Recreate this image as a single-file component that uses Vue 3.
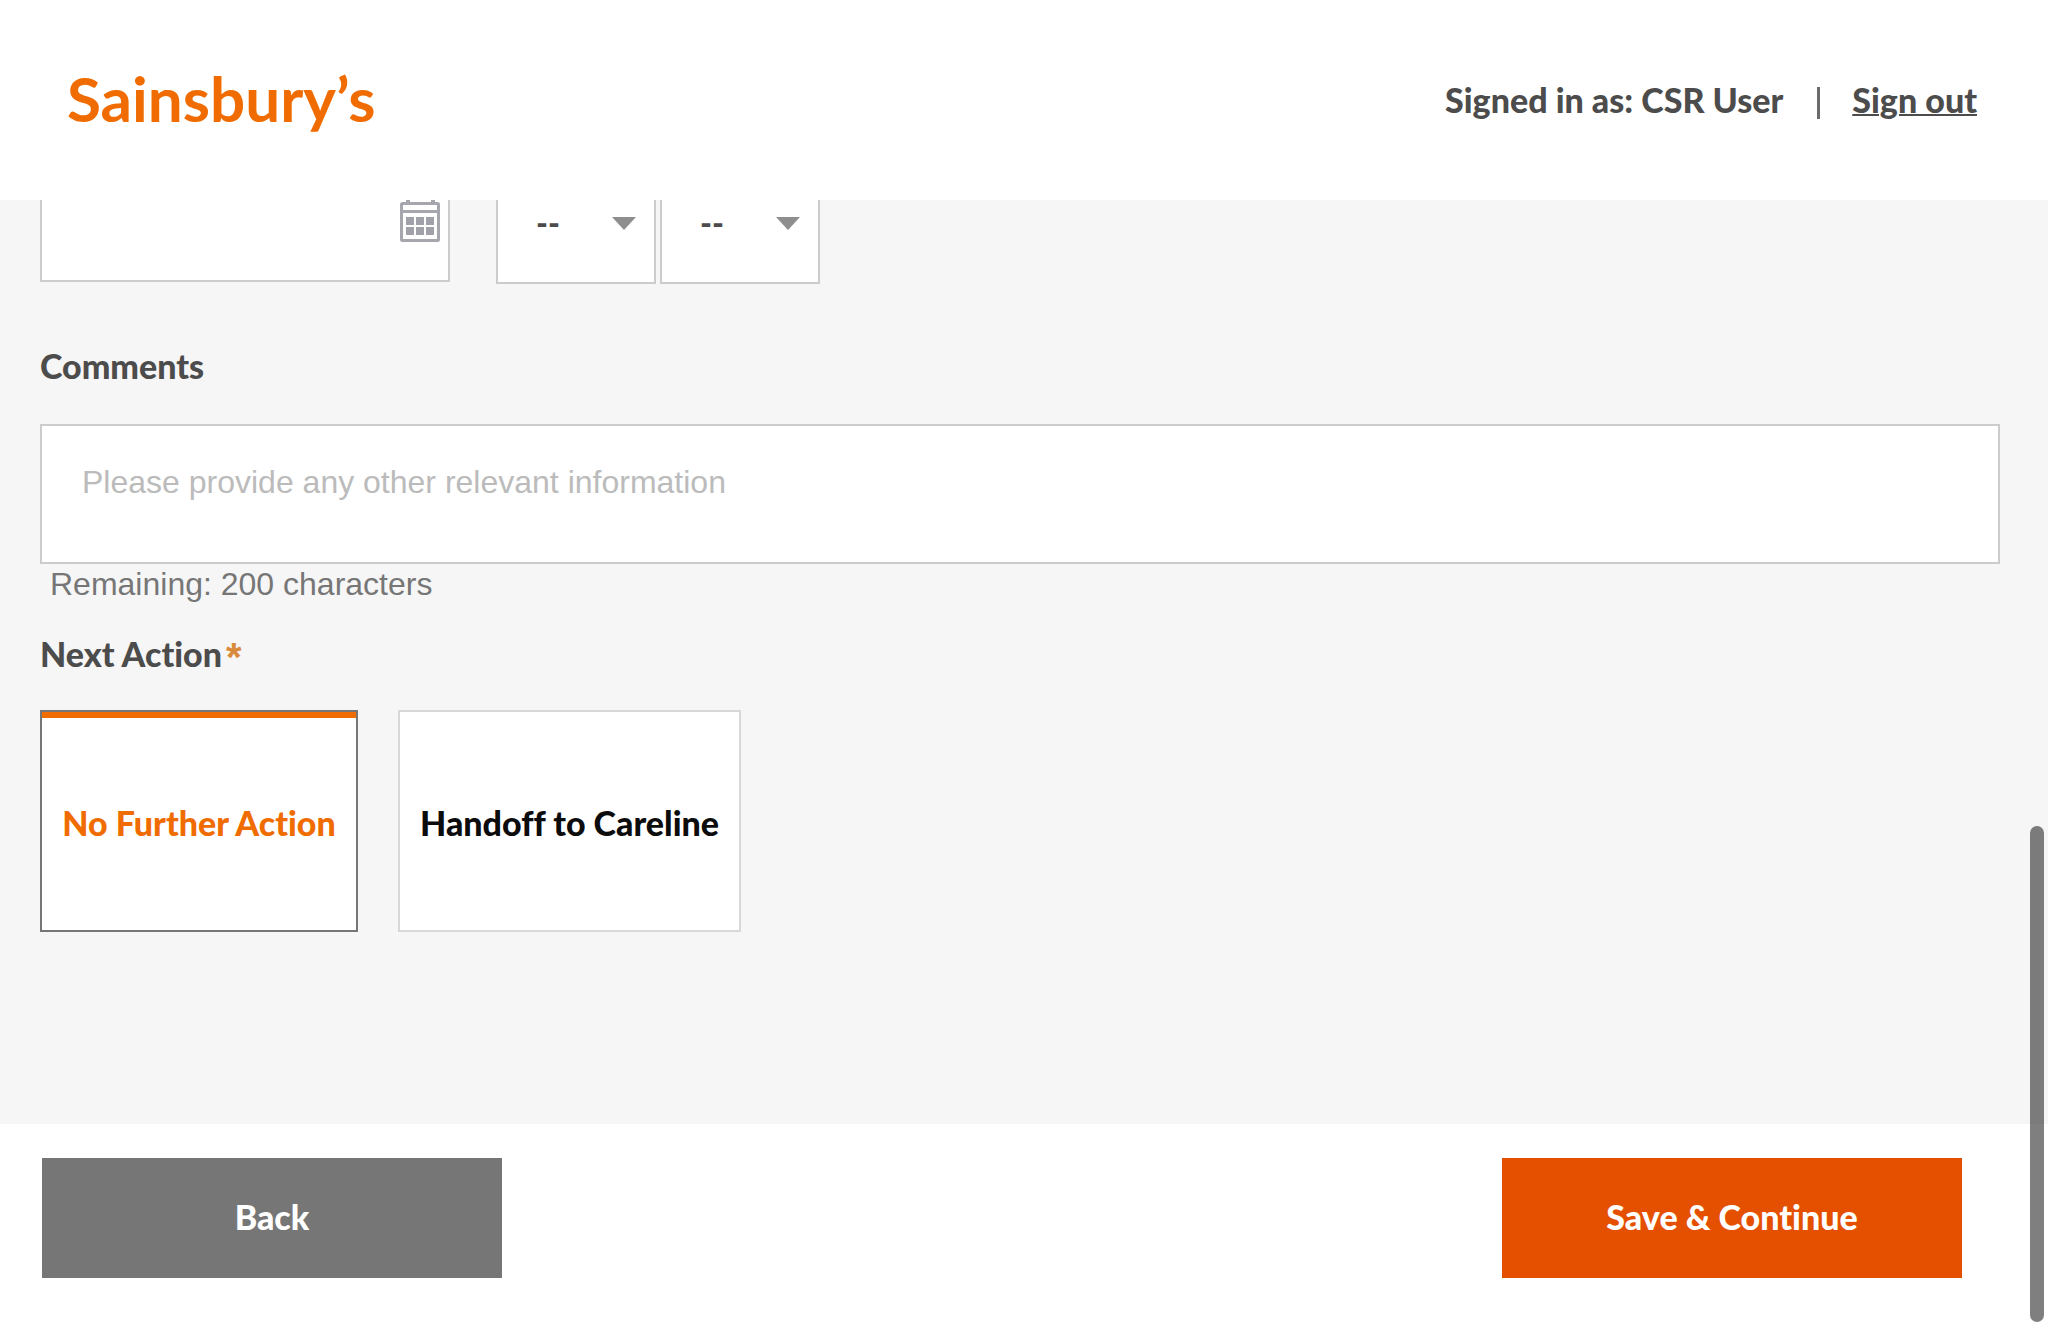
<script setup>
import { ref } from 'vue'

const date = ref('')
const hour = ref('--')
const minute = ref('--')
const comments = ref('')
const action = ref('none')
const maxLength = 200
const actions = [
  { value: 'none', label: 'No Further Action' },
  { value: 'careline', label: 'Handoff to Careline' },
]
const pad = (n) => String(n).padStart(2, '0')
const hours = Array.from({ length: 24 }, (_, i) => pad(i))
const minutes = Array.from({ length: 12 }, (_, i) => pad(i * 5))
</script>

<template>
  <div class="page">
    <header class="header">
      <a class="logo" href="#">Sainsbury’s</a>
      <div class="account">
        <span>Signed in as: CSR User</span>
        <span class="divider"></span>
        <a class="sign-out" href="#">Sign out</a>
      </div>
    </header>

    <main class="content">
      <div class="when">
        <div class="date">
          <input v-model="date" type="text" aria-label="Date" />
          <button type="button" aria-label="Open calendar">
            <svg viewBox="0 0 40 40" width="40" height="40" fill="none" stroke="#a6a7ad">
              <path d="M8 0v-4M33 0v-4" stroke-width="4" />
              <rect x="1.5" y="1.5" width="37" height="37" rx="1" stroke-width="3" />
              <path d="M2 9.500h36" stroke-width="3" />
              <path d="M6 19h8m2 0h8m2 0h8M6 29h8m2 0h8m2 0h8" stroke="#a0a1a9" stroke-width="8" />
            </svg>
          </button>
        </div>
        <div class="time">
          <div class="select">
            <select v-model="hour" aria-label="Hour">
              <option>--</option>
              <option v-for="h in hours" :key="h">{{ h }}</option>
            </select>
            <svg class="arrow" viewBox="0 0 24 14" width="24" height="14"><path d="M0 0h24L12 13z" fill="#8e8e8e" /></svg>
          </div>
          <div class="select">
            <select v-model="minute" aria-label="Minute">
              <option>--</option>
              <option v-for="m in minutes" :key="m">{{ m }}</option>
            </select>
            <svg class="arrow" viewBox="0 0 24 14" width="24" height="14"><path d="M0 0h24L12 13z" fill="#8e8e8e" /></svg>
          </div>
        </div>
      </div>

      <label class="title" for="comments">Comments</label>
      <textarea
        id="comments"
        v-model="comments"
        class="comments"
        :maxlength="maxLength"
        placeholder="Please provide any other relevant information"
      ></textarea>
      <p class="remaining">Remaining: {{ maxLength - comments.length }} characters</p>

      <fieldset class="next">
        <legend class="title">Next Action<span class="required">*</span></legend>
        <div class="cards">
          <label v-for="a in actions" :key="a.value" class="card" :class="{ selected: action === a.value }">
            <input v-model="action" type="radio" name="action" :value="a.value" />
            {{ a.label }}
          </label>
        </div>
      </fieldset>
    </main>

    <footer class="footer">
      <button type="button" class="button back">Back</button>
      <button type="button" class="button save">Save &amp; Continue</button>
    </footer>
    <div class="scroll-thumb"></div>
  </div>
</template>

<style>
body {
  margin: 0;
  background: #fff;
}
</style>

<style scoped>
* {
  box-sizing: border-box;
}
.page {
  display: flex;
  flex-direction: column;
  min-height: 100vh;
  color: #4c4c4c;
  font: 900 34px/40px Lato, sans-serif;
  font-variant-ligatures: none;
}
.header {
  display: flex;
  align-items: center;
  justify-content: space-between;
  height: 200px;
  padding: 0 71px 0 67px;
  background: #fff;
}
.logo {
  padding-bottom: 4px;
  color: #f06c00;
  font-size: 62px;
  font-weight: 700;
  line-height: 80px;
  text-decoration: none;
}
.account {
  display: flex;
  align-items: center;
}
.divider {
  width: 3px;
  height: 32px;
  margin: 6px 32px 0 34px;
  background: #6b6b6b;
}
.sign-out {
  color: inherit;
  text-decoration-thickness: 2px;
}
.content {
  flex: 1;
  overflow: hidden;
  padding: 0 48px 192px 40px;
  background: #f6f6f6;
}
.when {
  display: flex;
  gap: 46px;
  align-items: flex-start;
  margin-top: -38px;
}
.date {
  display: flex;
  align-items: center;
  width: 410px;
  height: 120px;
  padding-right: 8px;
  border: 2px solid #ccc;
  background: #fff;
}
.date input {
  flex: 1;
  min-width: 0;
  height: 100%;
  padding: 0 40px;
  border: 0;
  background: none;
  font: inherit;
}
.date button {
  display: flex;
  padding: 0;
  border: 0;
  background: none;
}
.date svg {
  overflow: visible;
}
.time {
  display: flex;
  gap: 4px;
}
.select {
  position: relative;
  width: 160px;
  height: 122px;
}
.select select {
  appearance: none;
  width: 100%;
  height: 100%;
  padding: 0 38px;
  border: 2px solid #ccc;
  border-radius: 0;
  background: #fff;
  color: #4c4c4c;
  font: 900 32px/40px Lato, sans-serif;
}
.arrow {
  position: absolute;
  right: 20px;
  top: 55px;
  pointer-events: none;
}
.title {
  display: block;
  padding: 0;
  line-height: 40px;
}
label.title {
  margin: 62px 0 38px;
}
.comments {
  display: block;
  width: 100%;
  height: 140px;
  padding: 36px 40px;
  border: 2px solid #ccc;
  border-radius: 0;
  background: #fff;
  color: #4c4c4c;
  font: 32px/40px "Liberation Sans", Arial, sans-serif;
  resize: none;
}
.comments::placeholder {
  color: #bbb;
}
.remaining {
  margin: 0 0 30px;
  padding: 0 10px;
  color: #767676;
  font: 32px/40px "Liberation Sans", Arial, sans-serif;
}
.next {
  margin: 0;
  padding: 0;
  border: 0;
}
.required {
  margin-left: 4px;
  color: #d98a3a;
  font: bold 40px/24px "Liberation Sans", Arial, sans-serif;
  vertical-align: -4px;
}
.cards {
  display: flex;
  gap: 40px;
  margin-top: 36px;
}
.card {
  display: flex;
  align-items: center;
  justify-content: center;
  min-width: 318px;
  height: 222px;
  padding: 4px 20px 0;
  border: 2px solid #d8d8d8;
  background: #fff;
  color: #0c0c0c;
  white-space: nowrap;
}
.card input {
  position: absolute;
  opacity: 0;
}
.card.selected {
  border-color: #767676;
  box-shadow: inset 0 6px #f06c00;
  color: #f06c00;
}
.footer {
  display: flex;
  justify-content: space-between;
  padding: 34px 86px 48px 42px;
  background: #fff;
}
.button {
  width: 460px;
  height: 120px;
  padding: 0 0 2px;
  border: 0;
  color: #fff;
  font: inherit;
}
.back {
  background: #767676;
}
.save {
  background: #e55000;
}
.scroll-thumb {
  position: fixed;
  right: 4px;
  bottom: 4px;
  width: 14px;
  height: 496px;
  border-radius: 7px;
  background: rgba(0, 0, 0, 0.5);
}
</style>
